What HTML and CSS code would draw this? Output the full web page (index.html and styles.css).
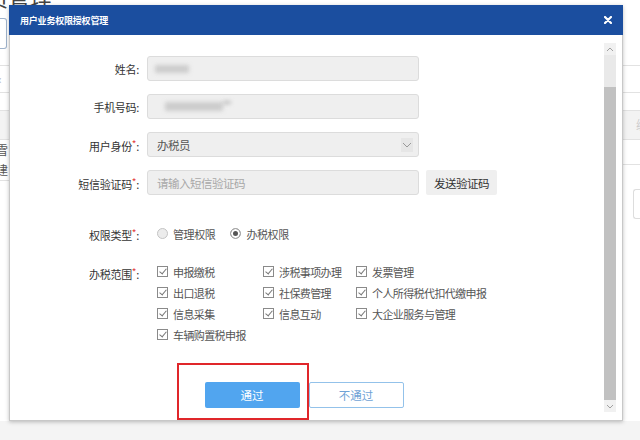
FILE: index.html
```html
<!DOCTYPE html>
<html lang="zh-CN">
<head>
<meta charset="utf-8">
<link rel="stylesheet" href="styles.css">
</head>
<body>
<div class="page">
  <div class="bg-title">员管理</div>
  <div class="bg-cols">
    <div class="bg-left">
      <div class="bg-box"></div>
      <div class="bg-line l80"></div>
      <div class="bg-chev">‹</div>
      <div class="bg-line"></div>
      <div class="bg-band"></div>
      <div class="bg-txt">雪</div>
      <div class="bg-txt">建</div>
      <div class="bg-line"></div>
    </div>
    <div class="bg-right">
      <div class="bg-line r80"></div>
      <div class="bg-line r107"></div>
      <div class="bg-band r-band"><span>编</span></div>
      <div class="bg-line r180"></div>
      <div class="bg-rbox"></div>
    </div>
  </div>
  <div class="bg-bottom"></div>
</div>

<div class="dialog">
  <div class="dlg-head">
    <span class="dlg-title">用户业务权限授权管理</span>
    <svg class="dlg-close" width="8" height="8" viewBox="0 0 8 8"><path d="M1 1L7 7M7 1L1 7" stroke="#fff" stroke-width="2.2" stroke-linecap="round"/></svg>
  </div>
  <div class="dlg-body">
    <div class="form">
      <div class="row">
        <label class="lbl">姓名:</label>
        <div class="inp"><span class="blur blur-name"></span></div>
      </div>
      <div class="row">
        <label class="lbl">手机号码:</label>
        <div class="inp"><span class="blur blur-phone"></span><span class="blur blur-dots"></span></div>
      </div>
      <div class="row">
        <label class="lbl">用户身份<i>*</i>:</label>
        <div class="inp sel"><span class="val">办税员</span>
          <span class="caret"><svg width="10" height="6" viewBox="0 0 10 6"><path d="M1 1L5 5L9 1" fill="none" stroke="#999" stroke-width="1"/></svg></span>
        </div>
      </div>
      <div class="row">
        <label class="lbl">短信验证码<i>*</i>:</label>
        <div class="inp"><span class="ph">请输入短信验证码</span></div>
        <span class="send">发送验证码</span>
      </div>
      <div class="row row-radio">
        <label class="lbl">权限类型<i>*</i>:</label>
        <div class="radios">
          <span class="radio"><span class="rdot"></span>管理权限</span>
          <span class="radio on"><span class="rdot"></span>办税权限</span>
        </div>
      </div>
      <div class="row row-scope">
        <label class="lbl">办税范围<i>*</i>:</label>
        <div class="checks">
          <span class="chk"><span class="box"></span>申报缴税</span>
          <span class="chk"><span class="box"></span>涉税事项办理</span>
          <span class="chk"><span class="box"></span>发票管理</span>
          <span class="chk"><span class="box"></span>出口退税</span>
          <span class="chk"><span class="box"></span>社保费管理</span>
          <span class="chk"><span class="box"></span>个人所得税代扣代缴申报</span>
          <span class="chk"><span class="box"></span>信息采集</span>
          <span class="chk"><span class="box"></span>信息互动</span>
          <span class="chk"><span class="box"></span>大企业服务与管理</span>
          <span class="chk"><span class="box"></span>车辆购置税申报</span>
        </div>
      </div>
      <div class="btns">
        <span class="btn pass">通过</span>
        <span class="btn reject">不通过</span>
      </div>
    </div>
    <div class="scroll">
      <div class="sb-arrow"><svg width="8" height="5" viewBox="0 0 8 5"><path d="M1 4L4 1L7 4" fill="none" stroke="#a0a0a0" stroke-width="1"/></svg></div>
      <div class="sb-gap"></div>
      <div class="sb-thumb"></div>
      <div class="sb-arrow"><svg width="8" height="5" viewBox="0 0 8 5"><path d="M1 1L4 4L7 1" fill="none" stroke="#a0a0a0" stroke-width="1"/></svg></div>
    </div>
  </div>
  <div class="mark"></div>
</div>
</body>
</html>
```
FILE: styles.css
```css
* { box-sizing: border-box; }
html, body { margin: 0; padding: 0; }
body {
  width: 640px; height: 440px; overflow: hidden; position: relative;
  background: #fff;
  font-family: "Noto Sans CJK SC", "Noto Sans", sans-serif;
  color: #333;
}
.page { width: 640px; height: 440px; display: flex; flex-direction: column; }
.bg-title { font-size: 22px; line-height: 22px; margin-top: -15px; color: #444; height: 22px; white-space: nowrap; margin-left: -14px; }
.bg-cols { flex: 1; display: flex; justify-content: space-between; }
.bg-left { width: 12px; padding-top: 11px; display: flex; flex-direction: column; }
.bg-box { height: 31px; border: 1px solid #9fb3cc; border-left: none; border-radius: 0 3px 3px 0; width: 7px; }
.bg-line { height: 1px; background: #e2e2e2; }
.l80 { margin-top: 16px; }
.bg-chev { height: 26px; font-size: 12px; line-height: 26px; color: #aaa; margin-left: -2px; }
.bg-band { height: 30px; background: #f3f3f3; margin-top: 17px; border-top: 1px solid #e2e2e2; border-bottom: 1px solid #e2e2e2; }
.bg-txt { font-size: 12px; line-height: 20px; height: 20px; margin-left: -4px; color: #555; }
.bg-right { width: 17px; padding-top: 58px; display: flex; flex-direction: column; }
.r107 { margin-top: 26px; }
.r-band { margin-top: 17px; font-size: 12px; color: #ccc; padding-left: 13px; line-height: 28px; overflow: hidden; }
.r180 { margin-top: 24px; }
.bg-rbox { margin-top: 24px; height: 30px; border: 1px solid #ddd; border-right: none; margin-left: 10px; border-radius: 3px 0 0 3px; }
.bg-bottom { height: 19px; background: #f4f4f4; }

.dialog {
  position: absolute; left: 9px; top: 5px; width: 614px; height: 416px;
  background: #fff; border: 1px solid #c8c8c8; border-top: none;
  box-shadow: 0 1px 4px rgba(0,0,0,0.25);
  display: flex; flex-direction: column;
}
.dlg-head {
  height: 30px; background: #1b4e9f; display: flex; align-items: center;
  justify-content: space-between; padding: 0 11px 0 11px; margin: 0 -1px;
}
.dlg-title { color: #fff; font-size: 9px; font-weight: bold; letter-spacing: -0.2px; }
.dlg-close { display: block; }
.dlg-body { flex: 1; display: flex; }
.form { flex: 1; padding-top: 21px; display: flex; flex-direction: column; }
.row { display: flex; align-items: center; height: 25px; margin-bottom: 13px; }
.lbl { width: 131px; text-align: right; font-size: 11px; color: #333; padding-right: 2px; white-space: nowrap; letter-spacing: -0.3px; }
.lbl i { font-style: normal; color: #e43c3c; font-size: 10px; vertical-align: 3px; }
.inp {
  margin-left: 6px; width: 272px; height: 25px; background: #efefef;
  border: 1px solid #dcdcdc; border-radius: 3px; display: flex; align-items: center;
  padding-left: 9px; position: relative; font-size: 11.5px;
}
.val { color: #555; letter-spacing: -0.5px; }
.ph { color: #a8a8a8; letter-spacing: -0.5px; }
.sel { justify-content: space-between; padding-right: 5px; }
.caret { width: 12px; height: 14px; background: #e6e6e6; display: flex; align-items: center; justify-content: center; }
.blur { display: inline-block; background: #c4c4c4; filter: blur(2px); height: 8px; }
.blur-name { width: 34px; margin-left: -2px; opacity: 0.8; }
.blur-phone { width: 58px; margin-left: 8px; height: 9px; opacity: 0.8; }
.blur-dots { width: 8px; height: 3px; margin-left: 0px; margin-top: -8px; background: #999; opacity: 0.6; }
.send {
  margin-left: 7px; width: 71px; height: 25px; background: #efefef; border-radius: 2px;
  font-size: 11.5px; display: flex; align-items: center; justify-content: center; color: #333; letter-spacing: -0.5px;
}
.row-radio { margin-top: 13px; margin-bottom: 15px; }
.radios { display: flex; margin-left: 16px; font-size: 11px; color: #555; letter-spacing: -0.4px; }
.radio { display: flex; align-items: center; margin-right: 15px; }
.rdot { width: 11px; height: 11px; border-radius: 50%; border: 1px solid #c4c4c4; background: #ececec; margin-right: 5px; }
.radio.on .rdot { background: #555; box-shadow: inset 0 0 0 2px #fff; border-color: #aaa; }
.row-scope { align-items: flex-start; height: auto; margin-bottom: 0; }
.row-scope .lbl { line-height: 21px; }
.checks {
  margin-left: 16px; display: grid; grid-template-columns: 106px 93px auto;
  grid-auto-rows: 21px; font-size: 11px; color: #555; letter-spacing: -0.6px;
}
.chk { display: flex; align-items: center; white-space: nowrap; }
.box {
  width: 11px; height: 11px; border: 1px solid #8a8a8a; margin-right: 5px; position: relative; flex: none;
}
.box::after {
  content: ""; position: absolute; left: 3px; top: 0px; width: 3px; height: 6px;
  border: solid #777; border-width: 0 1px 1px 0; transform: rotate(40deg);
}
.btns { display: flex; justify-content: center; gap: 9px; margin-top: 37px; padding-right: 6px; }
.btn { width: 95px; height: 26px; display: flex; align-items: center; justify-content: center; font-size: 11.5px; border-radius: 2px; }
.pass { background: #51a5ef; color: #fff; }
.reject { background: #fff; border: 1px solid #93c2ea; color: #6fa3d6; }
.scroll { width: 12px; margin: 8px 6px 8px 0; display: flex; flex-direction: column; background: #f1f1f1; }
.sb-arrow { height: 12px; display: flex; align-items: center; justify-content: center; background: #f1f1f1; }
.sb-gap { height: 32px; background: #e9e9e9; }
.sb-thumb { flex: 1; background: #c1c1c1; }
.mark { position: absolute; left: 167px; top: 358px; width: 132px; height: 57px; border: 2px solid #e0262a; }
```
